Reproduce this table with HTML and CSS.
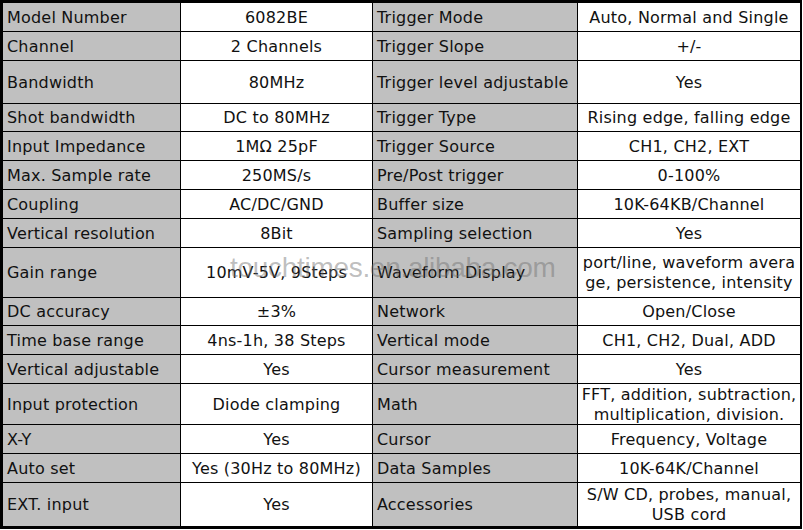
FILE: index.html
```html
<!DOCTYPE html>
<html>
<head>
<meta charset="utf-8">
<link rel="stylesheet" href="styles.css">
</head>
<body>
<div class="wrap">
  <div class="spec">
    <div class="c k">Model Number</div><div class="c v">6082BE</div><div class="c k">Trigger Mode</div><div class="c v">Auto, Normal and Single</div>
    <div class="c k">Channel</div><div class="c v">2 Channels</div><div class="c k">Trigger Slope</div><div class="c v">+/-</div>
    <div class="c k">Bandwidth</div><div class="c v">80MHz</div><div class="c k">Trigger level adjustable</div><div class="c v">Yes</div>
    <div class="c k">Shot bandwidth</div><div class="c v">DC to 80MHz</div><div class="c k">Trigger Type</div><div class="c v">Rising edge, falling edge</div>
    <div class="c k">Input Impedance</div><div class="c v">1MΩ 25pF</div><div class="c k">Trigger Source</div><div class="c v">CH1, CH2, EXT</div>
    <div class="c k">Max. Sample rate</div><div class="c v">250MS/s</div><div class="c k">Pre/Post trigger</div><div class="c v">0-100%</div>
    <div class="c k">Coupling</div><div class="c v">AC/DC/GND</div><div class="c k">Buffer size</div><div class="c v">10K-64KB/Channel</div>
    <div class="c k">Vertical resolution</div><div class="c v">8Bit</div><div class="c k">Sampling selection</div><div class="c v">Yes</div>
    <div class="c k">Gain range</div><div class="c v">10mV-5V, 9Steps</div><div class="c k">Waveform Display</div><div class="c v">port/line, waveform avera<br>ge, persistence, intensity</div>
    <div class="c k">DC accuracy</div><div class="c v">±3%</div><div class="c k">Network</div><div class="c v">Open/Close</div>
    <div class="c k">Time base range</div><div class="c v">4ns-1h, 38 Steps</div><div class="c k">Vertical mode</div><div class="c v">CH1, CH2, Dual, ADD</div>
    <div class="c k">Vertical adjustable</div><div class="c v">Yes</div><div class="c k">Cursor measurement</div><div class="c v">Yes</div>
    <div class="c k">Input protection</div><div class="c v">Diode clamping</div><div class="c k">Math</div><div class="c v">FFT, addition, subtraction,<br>multiplication, division.</div>
    <div class="c k">X-Y</div><div class="c v">Yes</div><div class="c k">Cursor</div><div class="c v">Frequency, Voltage</div>
    <div class="c k">Auto set</div><div class="c v">Yes (30Hz to 80MHz)</div><div class="c k">Data Samples</div><div class="c v">10K-64K/Channel</div>
    <div class="c k">EXT. input</div><div class="c v">Yes</div><div class="c k">Accessories</div><div class="c v">S/W CD, probes, manual,<br>USB cord</div>
  </div>
  <div class="watermark">touchtimes.en.alibaba.com</div>
</div>
</body>
</html>
```

FILE: styles.css
```css
html, body {
  margin: 0;
  padding: 0;
  background: #fff;
}
.wrap {
  position: relative;
  width: 802px;
}
.spec {
  display: grid;
  grid-template-columns: 177px 191px 204px 222px;
  grid-template-rows: 28px 28px 42px 27px 28px 28px 28px 28px 49px 27px 28px 28px 40px 28px 28px 43px;
  gap: 1px;
  padding: 3px 2px 3px 3px;
  background: #000;
  width: 797px;
  font-family: "DejaVu Sans", sans-serif;
  font-size: 16px;
  letter-spacing: 0.2px;
  color: #111;
}
.c {
  display: flex;
  align-items: center;
  line-height: 20px;
  padding-top: 1px;
  overflow: hidden;
  white-space: nowrap;
}
.k {
  background: #c0c0c0;
  padding-left: 4px;
}
.v {
  background: #fff;
  justify-content: center;
  text-align: center;
}
.watermark {
  position: absolute;
  left: 230px;
  top: 252px;
  font-family: "Liberation Sans", Arial, sans-serif;
  font-size: 28px;
  letter-spacing: -0.3px;
  color: rgba(110, 110, 110, 0.45);
  pointer-events: none;
}
```
